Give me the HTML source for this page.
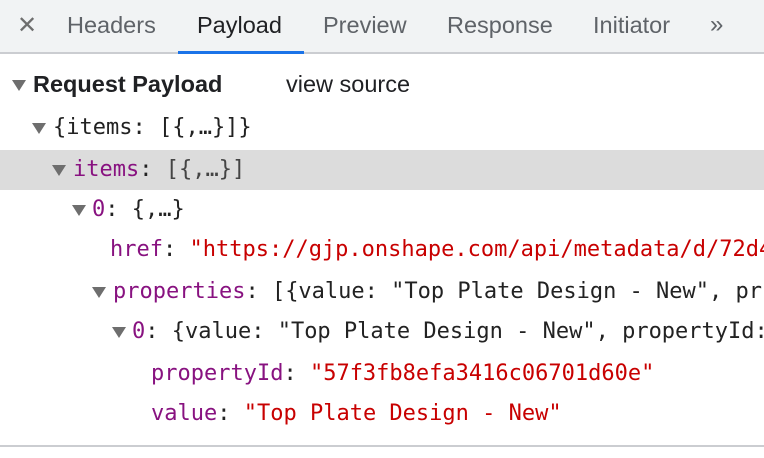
<!DOCTYPE html>
<html><head><meta charset="utf-8"><style>
*{margin:0;padding:0;box-sizing:border-box}
html,body{width:764px;height:458px;overflow:hidden}
body{background:#fff;position:relative;font-family:"Liberation Sans",Arial,sans-serif}
.tabs{position:absolute;left:0;top:0;width:764px;height:54px;background:#f1f3f4;border-bottom:2px solid #cbcdd1}
.tab{position:absolute;top:12px;font-size:23.5px;color:#5f6368}
.act{color:#202124}
.ul{position:absolute;left:178px;top:51px;width:126px;height:3px;background:#1a73e8}
.row{position:absolute;left:0;width:764px;height:40px;white-space:pre;overflow:hidden;font-family:"DejaVu Sans Mono","Liberation Mono",monospace;font-size:22px;line-height:40px;color:#222}
.tri{position:absolute;width:0;height:0;border-left:7px solid transparent;border-right:7px solid transparent;border-top:11px solid #6e6e6e}
.p{color:#881280}.s{color:#c80000}.g{color:#444}
.t{position:absolute}
</style></head><body>
<div class="tabs">
<div class="tab" style="left:17px;top:11px;font-size:24px;color:#6e6e6e">✕</div>
<div class="tab" style="left:67px">Headers</div>
<div class="tab act" style="left:197px">Payload</div>
<div class="tab" style="left:323px">Preview</div>
<div class="tab" style="left:447px">Response</div>
<div class="tab" style="left:593px">Initiator</div>
<div class="tab" style="left:710px;top:11px;font-size:24px">»</div>
</div>
<div class="ul"></div>
<div class="tri" style="left:12px;top:80px"></div>
<div style="position:absolute;left:33px;top:71px;font-size:23.5px;font-weight:bold;color:#202124">Request Payload</div>
<div style="position:absolute;left:286px;top:71px;font-size:23.5px;color:#202124">view source</div>

<div class="row" style="top:108px"><div class="tri" style="left:32px;top:15px"></div><span class="t" style="left:53px">{items: [{,…}]}</span></div>
<div class="row" style="top:150px;background:#dcdcdc"><div class="tri" style="left:52px;top:15px"></div><span class="t" style="left:73px"><span class="p">items</span>: <span class="g">[{,…}]</span></span></div>
<div class="row" style="top:190px"><div class="tri" style="left:72px;top:15px"></div><span class="t" style="left:92px"><span class="p">0</span>: {,…}</span></div>
<div class="row" style="top:230px"><span class="t" style="left:110px"><span class="p">href</span>: <span class="s">"https://gjp.onshape.com/api/metadata/d/72d4</span></span></div>
<div class="row" style="top:272px"><div class="tri" style="left:92px;top:15px"></div><span class="t" style="left:113px"><span class="p">properties</span>: [{value: "Top Plate Design - New", pr</span></div>
<div class="row" style="top:312px"><div class="tri" style="left:112px;top:15px"></div><span class="t" style="left:132px"><span class="p">0</span>: {value: "Top Plate Design - New", propertyId:</span></div>
<div class="row" style="top:354px"><span class="t" style="left:151px"><span class="p">propertyId</span>: <span class="s">"57f3fb8efa3416c06701d60e"</span></span></div>
<div class="row" style="top:394px"><span class="t" style="left:151px"><span class="p">value</span>: <span class="s">"Top Plate Design - New"</span></span></div>
<div style="position:absolute;left:0;top:445px;width:764px;height:2px;background:#cbcdd1"></div>
</body></html>
